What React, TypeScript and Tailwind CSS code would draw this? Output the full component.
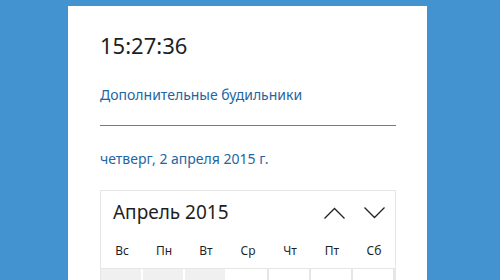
const weekDays = ["Вс", "Пн", "Вт", "Ср", "Чт", "Пт", "Сб"];

function Chevron({ up }: { up?: boolean }) {
  return (
    <svg width="21" height="12" viewBox="0 0 21 12" fill="none" stroke="#222" strokeWidth="1.3">
      {up ? <path d="M0.5 11.5 L10.5 1.5 L20.5 11.5" /> : <path d="M0.5 0.5 L10.5 10.5 L20.5 0.5" />}
    </svg>
  );
}

export default function App() {
  return (
    <div className="h-[280px] w-[500px] overflow-hidden bg-[#4393d1] pt-[6px] font-['Noto_Sans',sans-serif]">
      <div className="ml-[68px] h-[300px] w-[359px] bg-white pl-[32px] pr-[31px]">
        <div className="pt-[24px] text-[22px] leading-[30px] text-[#1f1f1f]">15:27:36</div>
        <div className="mt-[25px] text-[14px] leading-[20px] text-[#1e66a2]">Дополнительные будильники</div>
        <div className="mt-[20px] h-px bg-[#7a7a7a]" />
        <div className="mt-[23px] text-[14px] leading-[20px] text-[#1e66a2]">четверг, 2 апреля 2015 г.</div>
        <div className="mt-[21px] border border-[#e6e6e6]">
          <div className="flex h-[42px] items-center justify-between pl-[12px] pr-[10px]">
            <span className="text-[19px] text-[#1f1f1f]">Апрель 2015</span>
            <div className="flex items-center gap-[19px] pt-[2px]">
              <Chevron up />
              <Chevron />
            </div>
          </div>
          <div className="grid h-[35px] grid-cols-7 items-center text-[12px] text-[#1f1f1f]">
            {weekDays.map((d) => (
              <div key={d} className="text-center">
                {d}
              </div>
            ))}
          </div>
          <div className="grid grid-cols-7 border-t border-[#e6e6e6]">
            {weekDays.map((d, i) => (
              <div
                key={d}
                className={`h-[40px] border-r-2 border-white ${i < 3 ? "bg-[#f0f0f0]" : "bg-white border-r border-r-[#e6e6e6]"}`}
              />
            ))}
          </div>
        </div>
      </div>
    </div>
  );
}
